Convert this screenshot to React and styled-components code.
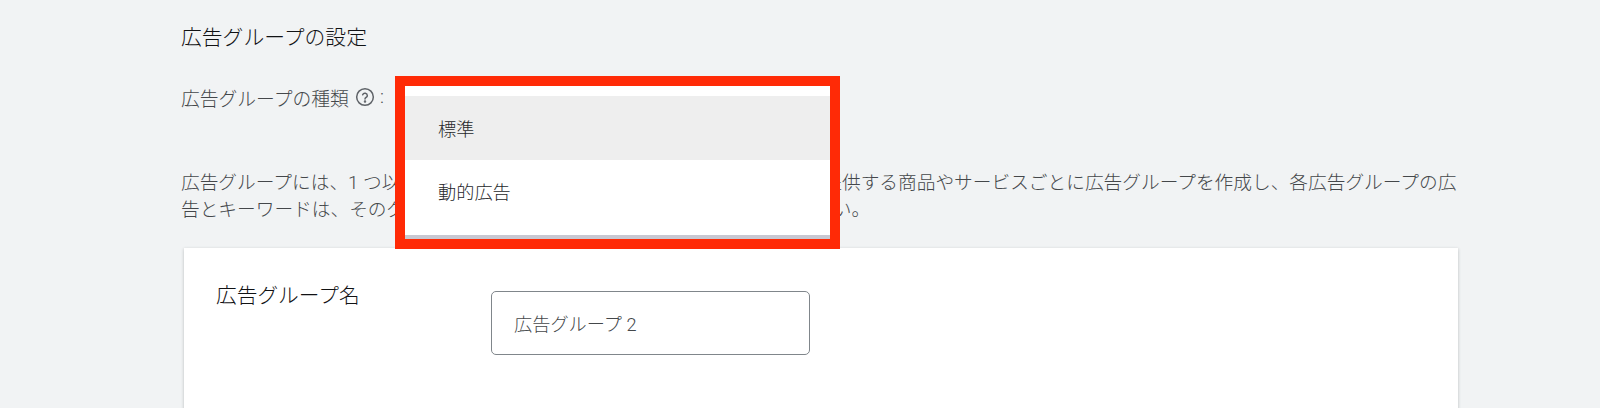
import React from 'react';
import styled, { createGlobalStyle } from 'styled-components';

const GlobalStyle = createGlobalStyle`
  html, body {
    margin: 0;
    height: 408px;
    overflow: hidden;
    background: #f1f3f4;
    font-family: Roboto, "Noto Sans CJK JP", "Noto Sans", sans-serif;
  }
`;

const Page = styled.div`
  position: relative;
  width: 1600px;
  height: 408px;
  overflow: hidden;
  padding: 25px 100px 0 181px;
  box-sizing: border-box;
`;

const SectionTitle = styled.h2`
  margin: 0;
  font-size: 20.8px;
  line-height: 26px;
  font-weight: 300;
  color: #111214;
`;

const TypeRow = styled.div`
  display: flex;
  align-items: center;
  margin-top: 33px;
  height: 26px;
  font-size: 18.8px;
  font-weight: 300;
  color: #44474a;
`;

const HelpIcon = styled.svg`
  width: 20px;
  height: 20px;
  margin-left: 6px;
  margin-right: 5px;
  color: #5f6368;
`;

const Description = styled.p`
  margin: 60px 0 0;
  font-size: 18.7px;
  font-weight: 300;
  line-height: 26.5px;
  color: #44474a;
  white-space: nowrap;
`;

const Card = styled.section`
  display: flex;
  align-items: flex-start;
  margin: 25px 0 0 3px;
  width: 1274px;
  height: 200px;
  padding: 33px 32px 0;
  box-sizing: border-box;
  background: #fff;
  box-shadow: 0 1px 3px rgba(60, 64, 67, 0.3);
`;

const FieldLabel = styled.div`
  width: 275px;
  font-size: 20.7px;
  font-weight: 300;
  line-height: 30px;
  color: #111214;
`;

const NameInput = styled.div`
  display: flex;
  align-items: center;
  width: 319px;
  height: 64px;
  margin-top: 10px;
  padding-left: 22px;
  box-sizing: border-box;
  border: 1px solid #80868b;
  border-radius: 5px;
  font-size: 18.2px;
  font-weight: 300;
  color: #44474a;
`;

const Highlight = styled.div`
  position: absolute;
  left: 395px;
  top: 76px;
  width: 445px;
  height: 173px;
  box-sizing: border-box;
  border: 10px solid #ff2a06;
  background: #fff;
`;

const Menu = styled.ul`
  list-style: none;
  margin: 0;
  padding: 10px 0 0;
  height: 153px;
  box-sizing: border-box;
  border-bottom: 4px solid #c8c8d2;
  background: #fff;
`;

const MenuItem = styled.li`
  display: flex;
  align-items: center;
  height: 63.5px;
  padding-left: 33px;
  font-size: 18.2px;
  font-weight: 300;
  color: #26282b;
  background: ${(p) => (p.$active ? '#eeeeee' : 'transparent')};
`;

export default function App() {
  return (
    <>
      <GlobalStyle />
      <Page>
        <SectionTitle>広告グループの設定</SectionTitle>
        <TypeRow>
          広告グループの種類
          <HelpIcon viewBox="0 0 24 24" fill="none" stroke="currentColor" strokeWidth="1.8" strokeLinecap="round">
            <circle cx="12" cy="12" r="10" />
            <path d="M9.2 9.4a2.9 2.9 0 0 1 5.6 1c0 1.9-2.8 2.3-2.8 4" />
            <circle cx="12" cy="17.4" r="0.6" fill="currentColor" />
          </HelpIcon>
          :
        </TypeRow>
        <Description>
          広告グループには、1 つ以上の広告と 関連性の高い キーワードを 含めます。提供する商品やサービスごとに広告グループを作成し、各広告グループの広
          <br />
          告とキーワードは、そのグループ商品やサービスに関連するものにしてください。
        </Description>
        <Card>
          <FieldLabel>広告グループ名</FieldLabel>
          <NameInput>広告グループ 2</NameInput>
        </Card>
        <Highlight>
          <Menu>
            <MenuItem $active>標準</MenuItem>
            <MenuItem>動的広告</MenuItem>
          </Menu>
        </Highlight>
      </Page>
    </>
  );
}
